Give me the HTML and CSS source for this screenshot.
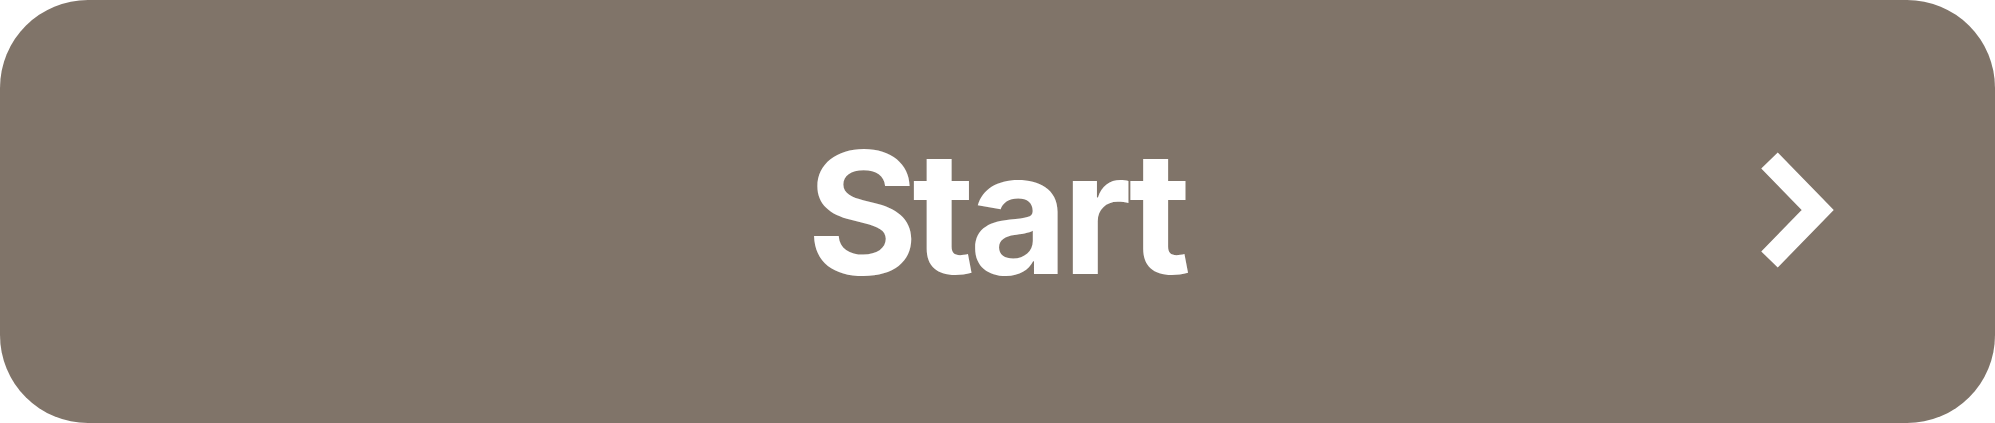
FILE: index.html
```html
<!DOCTYPE html>
<html lang="en">
<head>
<meta charset="utf-8">
<title>Start</title>
<link rel="stylesheet" href="styles.css">
</head>
<body>
<button class="start-btn" type="button">
  <span class="spacer"></span>
  <span class="label">Start</span>
  <span class="icon-cell">
    <svg class="chevron" width="85" height="120" viewBox="0 0 85 120" aria-hidden="true">
      <polyline points="14.5,10.5 62.7,60 14.5,109.5" fill="none" stroke="#ffffff" stroke-width="23" stroke-linejoin="miter" stroke-linecap="butt"/>
    </svg>
  </span>
</button>
</body>
</html>
```

FILE: styles.css
```css
html, body {
  margin: 0;
  padding: 0;
  background: #ffffff;
}

.start-btn {
  display: grid;
  grid-template-columns: 1fr auto 1fr;
  align-items: center;
  width: 1995px;
  height: 423px;
  margin: 0;
  padding: 0;
  border: none;
  border-radius: 88px;
  background: #807469;
  color: #ffffff;
  font-family: Inter, "Noto Sans", sans-serif;
  cursor: pointer;
}

.label {
  font-size: 170px;
  font-weight: 700;
  line-height: 1;
  letter-spacing: -6px;
  margin-right: 3px;
}

.icon-cell {
  display: flex;
  justify-content: flex-end;
  align-items: center;
  padding-right: 155px;
}

.chevron {
  display: block;
  margin-top: -3px;
}
```
